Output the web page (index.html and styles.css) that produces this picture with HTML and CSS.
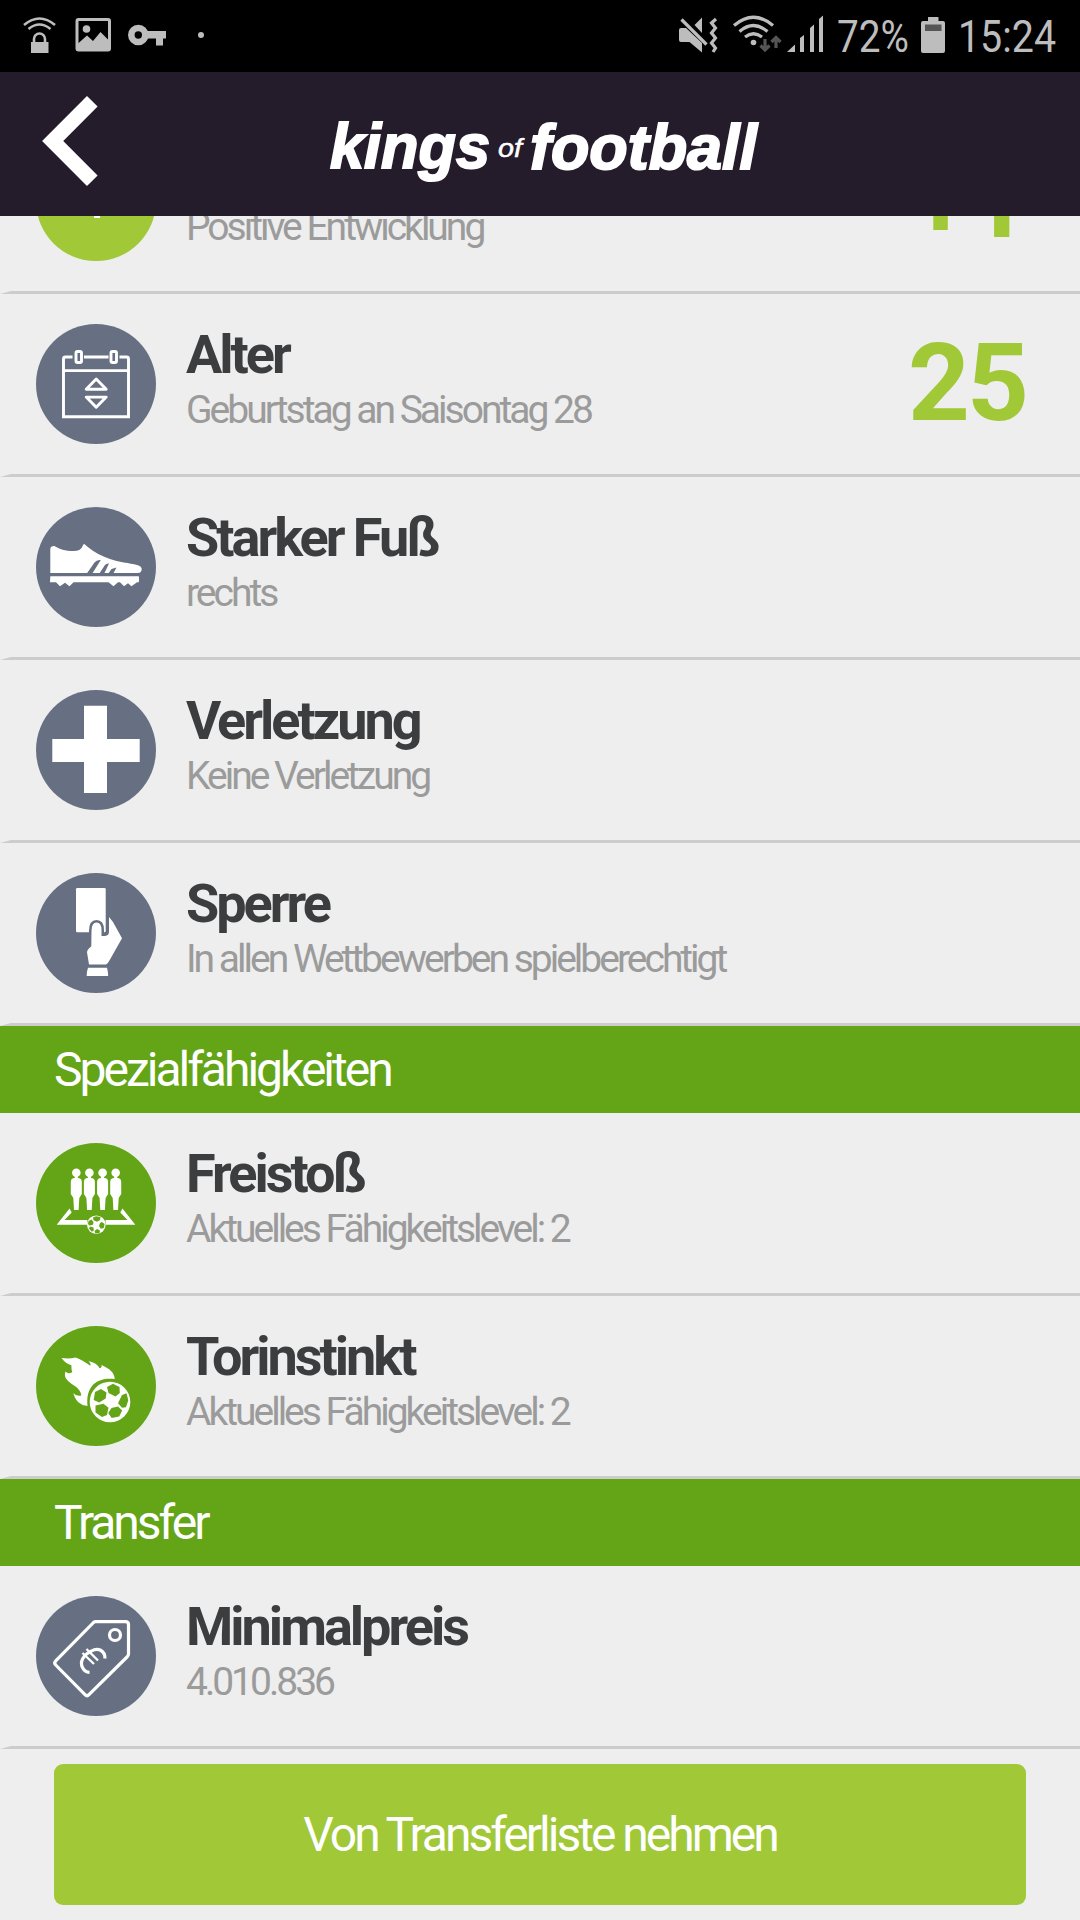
FILE: index.html
```html
<!DOCTYPE html>
<html lang="de">
<head>
<meta charset="utf-8">
<title>Kings of Football</title>
<link rel="stylesheet" href="styles.css">
</head>
<body>
<div class="statusbar">
  <div class="status-group">
    <svg width="34" height="72" viewBox="23 0 34 72"><g fill="none" stroke="#bdbdbd" stroke-width="2.6"><path d="M24 25Q39.500 12 55 25M28.500 29Q39.500 20 50.500 29"/><path d="M34 43V39a5.500 5.500 0 0 1 11 0V43"/></g><path fill="#bdbdbd" d="M31 42h17.500v11H31z"/></svg>
    <svg class="s-image" width="36" height="72" viewBox="75 0 36 72"><rect x="77" y="19.500" width="32.500" height="30.500" rx="1.500" fill="none" stroke="#bdbdbd" stroke-width="3"/><circle cx="86.500" cy="29" r="3.800" fill="#bdbdbd"/><path fill="#bdbdbd" d="M78 43.500l9-8 6 5.500 7.500-9 9 9V50H78z"/></svg>
    <svg class="s-key" width="39" height="72" viewBox="128 0 39 72"><circle cx="138.300" cy="35" r="7" fill="none" stroke="#bdbdbd" stroke-width="6.600"/><path fill="#bdbdbd" d="M146 31h20v7.500h-3v7h-7v-7h-10z"/></svg>
    <svg class="s-dot" width="6" height="72" viewBox="198 0 6 72"><circle cx="201" cy="35" r="3" fill="#bdbdbd"/></svg>
  </div>
  <div class="status-group">
    <svg width="39" height="72" viewBox="679 0 39 72"><path fill="#bdbdbd" d="M679 30q0-2 2-2h5l16 15v9.500L689.500 42H681q-2 0-2-2zM702 17.500V33l-7.500-8z"/><path d="M681.500 19.500l25 25" fill="none" stroke="#bdbdbd" stroke-width="3.200"/><path d="M716 19l-4.500 4 4 5-4 5 4 5-4 5 4 5-2.500 4" fill="none" stroke="#bdbdbd" stroke-width="3.200"/></svg>
    <svg class="s-wifi" width="49" height="72" viewBox="733 0 49 72"><g fill="none" stroke="#bdbdbd" stroke-width="3.200"><path d="M734 25.500Q753.500 9 773 25.500"/><path d="M739.500 31.500Q753.500 19.500 767.500 31.500"/><path d="M745 37Q753.500 30.500 762 37"/></g><circle cx="753.500" cy="42.500" r="2.800" fill="#bdbdbd"/><g fill="none" stroke="#555" stroke-width="3.200"><path d="M765 39v11M760.500 45.500l4.500 4.500 4.500-4.500M776 48V37.500M771.500 42l4.500-4.500 4.500 4.500"/></g></svg>
    <svg class="s-signal" width="37" height="72" viewBox="787 0 37 72"><path fill="#bdbdbd" d="M787 52l8-7.500V52zM800 38l4-3v17h-4zM810 28l4-3.500V52h-4zM819 19l4-3.500V52h-4z"/></svg>
    <svg class="s-percent" width="72" height="72" viewBox="838 0 72 72"><text class="status-text" x="837" y="52" textLength="72" lengthAdjust="spacingAndGlyphs">72%</text></svg>
    <svg class="s-battery" width="24" height="72" viewBox="921 0 24 72"><path fill="#bdbdbd" d="M923 21h5v-3.500q0-.5.5-.5h9.500q.5 0 .5.500V21h4.500q2 0 2 2v28q0 2-2 2h-20q-2 0-2-2V23q0-2 2-2z"/><path fill="#555" d="M925 24.500h16.500V31H925z"/></svg>
    <svg class="s-time" width="98" height="72" viewBox="959 0 98 72"><text class="status-text" x="958" y="52" textLength="98" lengthAdjust="spacingAndGlyphs">15:24</text></svg>
  </div>
</div>

<header class="topbar">
  <svg class="back" width="56" height="90" viewBox="0 0 56 90"><path d="M50.300 5.300L10.700 45l39.600 39.700" fill="none" stroke="#fff" stroke-width="15"/></svg>
  <svg class="logo" width="440" height="90" viewBox="320 100 440 90" role="img" aria-label="kings of football">
    <text class="logo-main" x="330" y="168" textLength="160" lengthAdjust="spacingAndGlyphs">kings</text>
    <text class="logo-of" x="498" y="157" textLength="24" lengthAdjust="spacingAndGlyphs">of</text>
    <text class="logo-main" x="530" y="169" textLength="227" lengthAdjust="spacingAndGlyphs">football</text>
  </svg>
</header>

<main class="content">
  <section class="row row-scrolled">
    <svg class="icon" viewBox="0 0 120 120"><circle class="c-lime" cx="60" cy="60" r="60"/><path fill="#fff" d="M61 26L38 50h20v27h6V50h20z"/></svg>
    <div class="info"><h2></h2><p>Positive Entwicklung</p></div>
    <div class="value">+1</div>
  </section>

  <section class="row">
    <svg class="icon" viewBox="0 0 120 120"><circle class="c-slate" cx="60" cy="60" r="60"/><g fill="none" stroke="#fff" stroke-width="2.900"><path d="M36.500 33H29.500q-2 0-2 2V92.700h65V35q0-2-2-2H83.500M48 33H72.500M27.500 46.600h65"/><rect x="40" y="27.500" width="5.500" height="11" rx="1.500"/><rect x="75" y="27.500" width="5.500" height="11" rx="1.500"/><path stroke-linejoin="round" d="M60.200 55l-10 10.200h20zM60.200 83.300l-10-10.200h20z"/></g></svg>
    <div class="info"><h2>Alter</h2><p>Geburtstag an Saisontag 28</p></div>
    <div class="value">25</div>
  </section>

  <section class="row">
    <svg class="icon" viewBox="0 0 120 120"><circle class="c-slate" cx="60" cy="60" r="60"/><path fill="#fff" d="M14.300 66V42q0-3 4-3c5 3 11 5 19 5q8 0 9.500-5.500l1.200-1.800 3.500 3C58 45 65 49 74 52c8 3 20 4 27 6q5 1.500 4.700 4.300-.2 3.700-3.700 3.700zM14.300 69.300h88.500q.5 1.500 0 6H101l-5.500 4-3.500-3-4 3-4-4h-2l-4.500 4-5-4H37.500l-4 4-4.500-3.500-5 3.500-4-4h-6z"/><path class="c-slate" d="M50.500 67l8-11.500q2-3 6.300-2.500L56 67zM63 67l6-9q1.500-1.800 4-1.500L68 67zM72 67l3.500-5 5-1.500L77 67z"/></svg>
    <div class="info"><h2>Starker Fuß</h2><p>rechts</p></div>
  </section>

  <section class="row">
    <svg class="icon" viewBox="0 0 120 120"><circle class="c-slate" cx="60" cy="60" r="60"/><path fill="#fff" d="M48 15.700h23V49h32.700v23H71v31H48V72H16.300V49H48z"/></svg>
    <div class="info"><h2>Verletzung</h2><p>Keine Verletzung</p></div>
  </section>

  <section class="row">
    <svg class="icon" viewBox="0 0 120 120"><circle class="c-slate" cx="60" cy="60" r="60"/><rect x="40" y="15" width="29.700" height="44.300" rx="1.200" fill="#fff"/><path class="hand" d="M55.500 58q0-8.500 5-8.500 5 0 5 7.500v6h3.500q4-.5 4-4V44l4 5 9 16.300L74 86.500q-2 4-4 5H53L51 79.300q0-2.500 4.300-6z"/><path fill="#fff" d="M52 94.700h19q1.500 6.500 1 8.300H50.700q-.5-3 1.300-8.300z"/></svg>
    <div class="info"><h2>Sperre</h2><p>In allen Wettbewerben spielberechtigt</p></div>
  </section>

  <h3 class="section-title">Spezialfähigkeiten</h3>

  <section class="row">
    <svg class="icon" viewBox="0 0 120 120"><defs><g id="player"><circle cy="29.700" r="4.300"/><path d="M-1.500 32h3v3q4 0 4 4v12l-2.500 4-.7 12h-4.600L-3 55l-2.500-4V39q0-4 4-4z"/></g></defs><circle class="c-green" cx="60" cy="60" r="60"/><g fill="#fff"><use href="#player" x="40.300"/><use href="#player" x="53.400"/><use href="#player" x="66.600"/><use href="#player" x="79.700"/><path d="M20.700 81.700L33.500 65.500l2.200 4-7.200 7.500h22.800v4.700zM99.300 81.700L86.500 65.500l-2.200 4 7.200 7.500H69.500v4.700z"/></g><circle cx="60.300" cy="81.700" r="9.300" fill="#fff"/><g class="c-green"><path d="M57 74.500l3-1.300 4.500.8-.5 3-3 1.800-3.500-1.500zM66 79l2.600 2-.8 4-3 .8-1.800-2.800 1-3zM61 86l3 1.500-.5 2.500-4 .4-1-2.400zM54.500 83.500l3 1 .3 3-2 1.300-3-3.500zM52.500 78l3-1.500 2 2.500-.5 2.800-3.500.7-1.500-1.500z"/></g></svg>
    <div class="info"><h2>Freistoß</h2><p>Aktuelles Fähigkeitslevel: 2</p></div>
  </section>

  <section class="row">
    <svg class="icon" viewBox="0 0 120 120"><circle class="c-green" cx="60" cy="60" r="60"/><path fill="#fff" d="M25.500 32q8 1.200 14-.5 6 2 14.800 8.200 1-2-2-4.700 9 2 11.200 7.300 2.500-.5 2-3.300C74 43 78 46 78.800 53c-8-1-16 0-22 6-5 6-6 12-5.300 21Q40 79 37.300 67q2.500 3.500 8 2.500 0-4-5-8.500Q29 54 29 50q-.5-3 .7-4.500 2 3 6.500.8-1-3-.8-7Q30 38 25.500 32z"/><circle cx="74" cy="76" r="20.300" fill="#fff"/><g class="c-green"><path d="M71 61l6-3.300 6.500 3.300.3 6-4.300 3.500-7-3.500zM86 69l4.500-1.800 1.800 7-2.300 7-4 .5-4-4.500zM75.500 82l6.500-1.500 4.200 4-3 6-7.500 1.500-3.500-5zM59.500 79.500l8-1.800 5 4-1.500 7.300-5 2-6.500-4.500zM59 66l6-3 5.500 3.500-.8 6-6.500 4-5.500-2.500z"/></g></svg>
    <div class="info"><h2>Torinstinkt</h2><p>Aktuelles Fähigkeitslevel: 2</p></div>
  </section>

  <h3 class="section-title">Transfer</h3>

  <section class="row">
    <svg class="icon" viewBox="0 0 120 120"><circle class="c-slate" cx="60" cy="60" r="60"/><g fill="none" stroke="#fff" stroke-width="3.200"><path d="M59.500 25.700H89.500q3 0 3 3V58q0 1.500-1.500 3L53 98.700q-2 2-4 0L19.700 69q-2-2 0-4.200L57 27q1-1.300 2.500-1.300z"/><circle cx="79" cy="39" r="5.500"/><path d="M69 62.500C69 54.500 62 51 55.500 55 47 59 43.500 66 46.500 71.500 48 74.500 50 76.300 53.500 76.300"/><path stroke-width="2.300" d="M46.500 57l11.500 11M50.500 53L62 64.500"/></g></svg>
    <div class="info"><h2>Minimalpreis</h2><p>4.010.836</p></div>
  </section>

  <button class="action" type="button">Von Transferliste nehmen</button>
</main>
</body>
</html>
```
FILE: styles.css
```css
* {
  box-sizing: border-box;
}

body {
  margin: 0;
  width: 1080px;
  height: 1920px;
  overflow: hidden;
  display: flex;
  flex-direction: column;
  background: #eee;
  font-family: Roboto, "Liberation Sans", sans-serif;
}

svg {
  display: block;
  flex: none;
  overflow: visible;
}

.statusbar {
  height: 72px;
  flex: none;
  display: flex;
  justify-content: space-between;
  padding: 0 23px;
  background: #000;
}

.status-group {
  display: flex;
}

.s-image { margin-left: 18px; }
.s-key { margin-left: 17px; }
.s-dot { margin-left: 31px; }
.s-wifi { margin-left: 15px; }
.s-signal { margin-left: 5px; }
.s-percent { margin-left: 14px; }
.s-battery { margin-left: 11px; }
.s-time { margin-left: 14px; }

.status-text {
  font-size: 45px;
  fill: #bdbdbd;
}

.topbar {
  height: 144px;
  flex: none;
  display: flex;
  align-items: flex-start;
  background: #241b2b;
}

.back {
  margin: 24px 0 0 42px;
}

.logo {
  margin: 28px 0 0 222px;
}

.logo-main {
  font: italic bold 63px "Liberation Sans", sans-serif;
  fill: #fff;
  stroke: #fff;
  stroke-width: 2px;
}

.logo-of {
  font: italic 25px "Liberation Sans", sans-serif;
  fill: #fff;
  stroke: #fff;
  stroke-width: 0.5px;
}

.content {
  flex: 1;
  min-height: 0;
  overflow: hidden;
  display: flex;
  flex-direction: column;
}

.row {
  height: 183px;
  flex: none;
  display: flex;
  align-items: flex-start;
  padding: 30px 54px 0 25px;
  border-left: 11px solid transparent;
  border-bottom: 3px solid #ccc;
}

.row-scrolled {
  margin-top: -105px;
}

.icon {
  width: 120px;
  height: 120px;
}

.c-slate { fill: #677082; }
.c-lime { fill: #a0c837; }
.c-green { fill: #64a518; }

.hand {
  fill: #fff;
  stroke: #677082;
  stroke-width: 5px;
  paint-order: stroke;
}

.info {
  flex: 1;
  padding: 1px 0 0 30px;
  white-space: nowrap;
}

.info h2 {
  margin: 0;
  height: 60px;
  font-size: 54px;
  line-height: 60px;
  font-weight: 700;
  letter-spacing: -3px;
  color: #3c3d3f;
}

.info p {
  margin: 0;
  font-size: 39px;
  line-height: 50px;
  letter-spacing: -3px;
  color: #9b9b9b;
}

.value {
  font-size: 108px;
  line-height: 118px;
  font-weight: 700;
  letter-spacing: -3px;
  color: #a0c837;
}

.section-title {
  height: 87px;
  flex: none;
  margin: 0;
  padding-left: 54px;
  font-size: 48px;
  line-height: 87px;
  font-weight: 400;
  letter-spacing: -3px;
  color: #fff;
  background: #64a518;
}

.action {
  height: 141px;
  flex: none;
  margin: 15px 54px 0;
  padding: 0;
  border: 0;
  border-radius: 9px;
  background: #a0c837;
  color: #fff;
  font-family: inherit;
  font-size: 48px;
  letter-spacing: -3px;
}
```
